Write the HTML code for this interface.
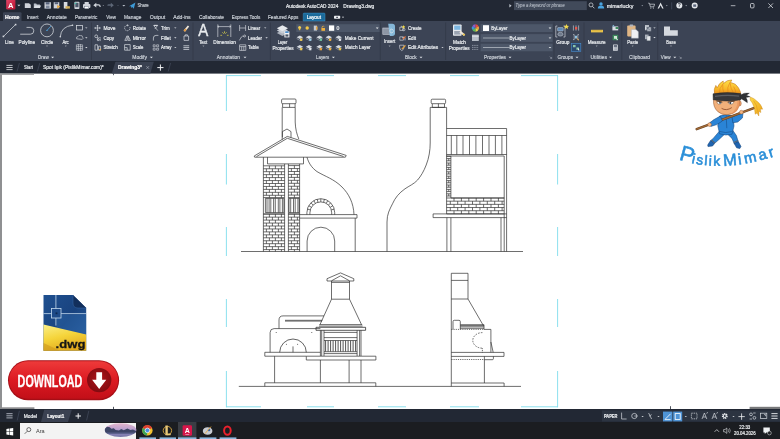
<!DOCTYPE html>
<html lang="en"><head><meta charset="utf-8"><title>Autodesk AutoCAD 2024 - Drawing3.dwg</title>
<style>
html,body{margin:0;padding:0;background:#fff;overflow:hidden}
body{width:780px;height:439px;position:relative;font-family:"Liberation Sans",sans-serif}
svg{position:absolute;left:0;top:0;display:block;will-change:transform}
text{font-family:"Liberation Sans",sans-serif}
.t{fill:#eaedf0;font-size:5.1px;stroke:#eaedf0;stroke-width:0.2px}
.tb{fill:#dfe3e8;font-size:5.1px}
.tp{fill:#cfd4db;font-size:5.1px;stroke:#cfd4db;stroke-width:0.16px}
.ln{fill:none;stroke:#2f2f2f;stroke-width:0.7;stroke-linejoin:miter}
.ic{fill:none;stroke:#d5dae0;stroke-width:0.7}
</style></head><body>
<svg width="780" height="439" viewBox="0 0 780 439">
<!-- backgrounds -->

<rect x="0" y="0" width="780" height="439" fill="#ffffff"/>
<rect x="0" y="0" width="780" height="21" fill="#222834"/>
<rect x="0" y="21" width="780" height="40" fill="#3c4455"/>
<rect x="0" y="61" width="780" height="12.6" fill="#222834"/>
<rect x="0" y="73.6" width="2" height="335" fill="#8f9092"/>
<rect x="0" y="73.6" width="34" height="1.3" fill="#9a9b9d"/>
<rect x="0" y="407.300" width="34.400" height="1.800" fill="#8a8b8d"/>
<rect x="749.600" y="406.800" width="31" height="2.200" fill="#77787a"/>
<rect x="0" y="409" width="780" height="13" fill="#222834"/>
<rect x="0" y="422" width="780" height="17" fill="#1b1d21"/>
<!-- titlebar -->
<defs><linearGradient id="alogo" x1="0" y1="0" x2="1" y2="1"><stop offset="0" stop-color="#e8476a"/><stop offset="1" stop-color="#b5122f"/></linearGradient></defs>
<rect x="6.2" y="-1" width="9.2" height="10.6" rx="1.3" fill="url(#alogo)"/>
<text x="10.8" y="8" font-size="7.6" font-weight="bold" fill="#fff" text-anchor="middle">A</text>
<path d="M17.4 4.85h3l-1.5 1.5z" fill="#d5dae0"/>
<g fill="#cfd3da">
<path d="M24.8 3.2h4.2l1.8 1.6v3.2h-6z"/>
<path d="M33.8 3.6h2.4l.7.8h3v3.6h-6.1z" fill="#b9bfc9"/><path d="M34.9 5.4h6.3l-1.3 2.6h-6.1z" fill="#d9dde3"/>
<path d="M44.5 2.2h6.4v6.4h-6.4z"/><rect x="45.7" y="2.2" width="3.8" height="2.3" fill="#56617a"/><rect x="45.9" y="5.6" width="3.6" height="3" fill="#7d879a"/>
<path d="M53.7 2.2h5.6v6.2h-5.6z"/><rect x="54.7" y="2.2" width="3.4" height="2" fill="#56617a"/><path d="M57.2 5l3.2 1.6-3.2 1.8z" fill="#e5a53a"/>
<path d="M63.8 2h3.6v6.4h-3.6z" fill="#d8dce2"/><path d="M65.5 6.2h4.4v2.4h-4.4z" fill="#d6b15a"/>
<rect x="74.4" y="1.8" width="5" height="7.2" rx="0.8" fill="#cfd4db"/><rect x="75.300" y="2.800" width="3.200" height="4.400" fill="#4a5568"/><path d="M74 3.400l2.200-1.200v2.400z" fill="#4ab8a8"/>
<rect x="83" y="4" width="7.4" height="4" rx="0.9"/><rect x="84.6" y="2" width="4.2" height="2.4"/><rect x="84.6" y="6.4" width="4.2" height="2.4" fill="#fff" stroke="#565f70" stroke-width="0.4"/>
<path d="M93.3 5.2l3-2.4v1.5h2.2q2.2 0 2.2 2.2v.6h-1.2v-.5q0-1-1-1h-2.2v2z"/>
</g>
<path d="M102.5 5.2h1.6l-0.8 0.8z" fill="#aeb5bf"/>
<path d="M113.8 5.2l-3-2.4v1.5h-2.2q-1.2 0-1.2 1v.5h1.2h2.2v2z" fill="#5d6777"/>
<path d="M117.2 5.2h1.6l-0.8 0.8z" fill="#6d7787"/>
<path d="M122.3 4.95h3l-1.5 1.5z" fill="#b9c0ca"/>
<path d="M129 6.2l6.4-3.6-1.6 6.2-1.6-1.9-1.1 1.2v-1.8z" fill="#3d9ad6"/>
<text class="tp" x="137.4" y="7.47" font-size="5.2" textLength="11.3" lengthAdjust="spacingAndGlyphs" >Share</text>
<text class="t" x="286" y="7.5" font-size="5" textLength="52.3" lengthAdjust="spacingAndGlyphs" >Autodesk AutoCAD 2024</text>
<text class="t" x="343.3" y="7.5" font-size="5" textLength="31" lengthAdjust="spacingAndGlyphs" >Drawing3.dwg</text>
<rect x="514" y="1.200" width="72.800" height="8.900" fill="#414a5a"/>
<path d="M509.400 4l2.200 1.700-2.200 1.700z" fill="#c4cad3"/>
<text class="tp" x="515.6" y="7.43" font-size="4.8" textLength="49" lengthAdjust="spacingAndGlyphs" font-style="italic" style="fill:#aab1bc;stroke:#aab1bc">Type a keyword or phrase</text>
<circle cx="591" cy="4.9" r="2" fill="none" stroke="#d5dae0" stroke-width="0.7"/><path d="M592.5 6.4l1.9 1.9" stroke="#d5dae0" stroke-width="0.8"/>
<circle cx="601" cy="3.9" r="1.7" fill="#4aa3df"/><path d="M597.8 8.6q0-3 3.2-3t3.2 3z" fill="#4aa3df"/>
<text class="t" x="606.7" y="7.6" font-size="5" textLength="26.6" lengthAdjust="spacingAndGlyphs" >mimarlucky</text>
<path d="M641.4 5.35h1.8l-0.9 0.9z" fill="#aeb5bf"/>
<path d="M648.2 3.2h1.2l1 3.6h3.4l.8-2.6h-4.6" fill="none" stroke="#d5dae0" stroke-width="0.7"/><circle cx="650.8" cy="8" r="0.6" fill="#d5dae0"/><circle cx="653.4" cy="8" r="0.6" fill="#d5dae0"/>
<path d="M657.6 8.4l3-5.8 3 5.8h-1.4l-1.6-3.2-1.6 3.2z" fill="#e4e7eb"/>
<path d="M665.9 5.35h1.8l-0.9 0.9z" fill="#aeb5bf"/>
<path d="M671.7 2.4v7" stroke="#596274" stroke-width="0.5"/>
<circle cx="679.3" cy="5.6" r="3" fill="#e4e7eb"/><text x="679.3" y="7.4" font-size="5" font-weight="bold" fill="#222834" text-anchor="middle">?</text>
<path d="M685.3 5.35h1.8l-0.9 0.9z" fill="#aeb5bf"/>
<circle cx="694.7" cy="5.6" r="3" fill="#e4e7eb"/><path d="M693.2 4.4h3v2.4h-3z" fill="#59647a"/>
<path d="M730.8 5.7h4.6" stroke="#e4e7eb" stroke-width="0.7"/>
<rect x="750.5" y="3.5" width="3.5" height="4.4" rx="0.9" fill="none" stroke="#e4e7eb" stroke-width="0.75"/>
<path d="M768.4 3.4l4.6 4.6M773 3.4l-4.6 4.6" stroke="#e4e7eb" stroke-width="0.75"/>
<!-- tabs -->
<path d="M3 21V13.3q0-1 1-1h16.5q1 0 1 1V21z" fill="#3c4455"/>
<text class="t" x="5.1" y="18.67" font-size="5.2" textLength="14.4" lengthAdjust="spacingAndGlyphs" style="fill:#ffffff;stroke:#ffffff" font-weight="bold">Home</text>
<text class="tp" x="27" y="18.64" font-size="5.1" textLength="11.4" lengthAdjust="spacingAndGlyphs" >Insert</text>
<text class="tp" x="46.8" y="18.64" font-size="5.1" textLength="19.9" lengthAdjust="spacingAndGlyphs" >Annotate</text>
<text class="tp" x="74.9" y="18.64" font-size="5.1" textLength="22.5" lengthAdjust="spacingAndGlyphs" >Parametric</text>
<text class="tp" x="106.3" y="18.64" font-size="5.1" textLength="9.6" lengthAdjust="spacingAndGlyphs" >View</text>
<text class="tp" x="124" y="18.64" font-size="5.1" textLength="17.5" lengthAdjust="spacingAndGlyphs" >Manage</text>
<text class="tp" x="149.7" y="18.64" font-size="5.1" textLength="15.6" lengthAdjust="spacingAndGlyphs" >Output</text>
<text class="tp" x="173.3" y="18.64" font-size="5.1" textLength="17.4" lengthAdjust="spacingAndGlyphs" >Add-ins</text>
<text class="tp" x="199" y="18.64" font-size="5.1" textLength="25" lengthAdjust="spacingAndGlyphs" >Collaborate</text>
<text class="tp" x="231.7" y="18.64" font-size="5.1" textLength="28.5" lengthAdjust="spacingAndGlyphs" >Express Tools</text>
<text class="tp" x="268" y="18.64" font-size="5.1" textLength="30.4" lengthAdjust="spacingAndGlyphs" >Featured Apps</text>
<path d="M303.200 21V13.900q0-.8.8-.8h20.200q.8 0 .8.800V21z" fill="#1b6a9a" stroke="#3d93c6" stroke-width="0.5"/>
<text class="t" x="306.7" y="18.64" font-size="5.1" textLength="14.3" lengthAdjust="spacingAndGlyphs" style="fill:#ffffff;stroke:#ffffff">Layout</text>
<rect x="334" y="15.800" width="6.200" height="3" rx="0.700" fill="#eef0f3"/><rect x="336.200" y="16.800" width="1.800" height="1" fill="#2a3140"/>
<path d="M341.9 16.85h2.2l-1.1 1.1z" fill="#e4e7eb"/>
<!-- ribbon -->
<path d="M91.5 22.5V60" stroke="#303846" stroke-width="0.7"/>
<path d="M193 22.5V60" stroke="#303846" stroke-width="0.7"/>
<path d="M270.4 22.5V60" stroke="#303846" stroke-width="0.7"/>
<path d="M380.3 22.5V60" stroke="#303846" stroke-width="0.7"/>
<path d="M445.6 22.5V60" stroke="#303846" stroke-width="0.7"/>
<path d="M554 22.5V60" stroke="#303846" stroke-width="0.7"/>
<path d="M584 22.5V60" stroke="#303846" stroke-width="0.7"/>
<path d="M621.8 22.5V60" stroke="#303846" stroke-width="0.7"/>
<path d="M657.7 22.5V60" stroke="#303846" stroke-width="0.7"/>
<g fill="none" stroke="#d8dce2" stroke-width="0.75">
<path d="M3.4 36.5L15.5 24.6"/>
<path d="M20.2 34.2H30.4A3.4 3.4 0 0 0 30.4 27.4H26.5"/>
<circle cx="47" cy="30.4" r="6.4"/>
<path d="M60.3 36.8Q61 26.5 72.5 25.2"/>
<rect x="76.4" y="25.6" width="6.2" height="4.4"/>
<path d="M76.6 38.8q-.8-2 1.4-2.2q.6-1.8 2.6-1q2-.4 2 1.6q1.2 1.2-.4 2.2z" stroke-width="0.6"/>
<path d="M76.4 44.8h6.2v5.4h-6.2zM76.4 46.6h6.2M76.4 48.4h6.2M78.4 44v7M80.6 44v7" stroke-width="0.55"/>
</g>
<rect x="2.6" y="35.6" width="1.6" height="1.6" fill="#d8dce2"/><rect x="14.8" y="23.8" width="1.6" height="1.6" fill="#d8dce2"/>
<path d="M47 30.4L51 26" stroke="#4aa3df" stroke-width="0.8"/><circle cx="47" cy="30.4" r="0.7" fill="#4aa3df"/>
<circle cx="60.3" cy="36.8" r="0.8" fill="#d8dce2"/><circle cx="72.5" cy="25.2" r="0.8" fill="#d8dce2"/>
<text class="t" x="5.1" y="43.74" font-size="5.1" textLength="8.6" lengthAdjust="spacingAndGlyphs" >Line</text>
<text class="t" x="18.5" y="43.74" font-size="5.1" textLength="16.5" lengthAdjust="spacingAndGlyphs" >Polyline</text>
<text class="t" x="41" y="43.74" font-size="5.1" textLength="12.3" lengthAdjust="spacingAndGlyphs" >Circle</text>
<text class="t" x="62.4" y="43.74" font-size="5.1" textLength="6.3" lengthAdjust="spacingAndGlyphs" >Arc</text>
<path d="M46.05 45.625h1.9l-0.95 0.95z" fill="#eef0f3"/>
<path d="M64.85 45.625h1.9l-0.95 0.95z" fill="#eef0f3"/>
<path d="M85.1 27.4h2.4l-1.2 1.2z" fill="#dde1e6"/>
<path d="M85.1 37.2h2.4l-1.2 1.2z" fill="#dde1e6"/>
<path d="M85.1 47h2.4l-1.2 1.2z" fill="#dde1e6"/>
<text class="tp" x="38" y="59.14" font-size="5.1" textLength="10.7" lengthAdjust="spacingAndGlyphs" >Draw</text>
<path d="M51.1 56.75h3l-1.5 1.5z" fill="#dde1e6"/>
<g fill="none" stroke="#d8dce2" stroke-width="0.7">
<path d="M97.5 25.2v5.6M94.7 28h5.6M96.5 26.2l1-1 1 1M96.5 29.8l1 1 1-1M95.7 27l-1 1 1 1M99.3 27l1 1-1 1"/>
<circle cx="96.2" cy="36.3" r="1.4"/><path d="M97.4 37.6h3v3h-3z" stroke-dasharray="0.9 0.5"/><circle cx="98.4" cy="39.4" r="0.9"/>
<path d="M95 44.8h2.6v5.4H95zM98.6 46.2h2v4h-2z"/>
<path d="M129.8 27A2.7 2.7 0 1 1 127.4 25.3" stroke-dasharray="1.4 0.6"/><path d="M127.2 24.2l1.6 1.1-1.6 1.1z" fill="#d8dce2" stroke="none"/>
<path d="M124.8 40.4l2.3-4.6v4.6zM128.1 35.8l2.3 4.6h-2.3z"/>
<path d="M124.6 44.6h5.6v5.6h-5.6zM124.6 47.6h2.6v2.6"/>
<path d="M153.4 25.2l4.4 5.4M157.8 25.2l-3 3.8"/><path d="M154 25.4h3.6" stroke-width="1.1"/>
<path d="M153.4 40.6V38q0-2.6 2.6-2.6h2.4"/>
<path d="M153.2 44.8h2v2h-2zM156.6 44.8h2v2h-2zM153.2 48.2h2v2h-2zM156.6 48.2h2v2h-2z" stroke-width="0.6"/>
<path d="M184 36h4.6v4.4H184zM185.2 36v-1.2h2.2V36"/>
<path d="M183.4 45.8h5.8M183.4 47.6h5.8M183.4 49.4h5.8" stroke-width="0.8"/>
</g>
<path d="M183.6 30.6l4.2-5.2 1.4 1.1-4.2 5.2z" fill="#f0e6d8"/><path d="M183.6 30.6l1.6-2 1.4 1.1-1.6 2z" fill="#e89a3c"/>
<path d="M99 49.6l1.8-1.2v2.4z" fill="#e4a94a"/>
<text class="t" x="103.4" y="29.84" font-size="5.1" textLength="12" lengthAdjust="spacingAndGlyphs" >Move</text>
<text class="t" x="103.4" y="39.74" font-size="5.1" textLength="10.6" lengthAdjust="spacingAndGlyphs" >Copy</text>
<text class="t" x="103.4" y="49.34" font-size="5.1" textLength="14.4" lengthAdjust="spacingAndGlyphs" >Stretch</text>
<text class="t" x="132.7" y="29.84" font-size="5.1" textLength="13.3" lengthAdjust="spacingAndGlyphs" >Rotate</text>
<text class="t" x="132.7" y="39.74" font-size="5.1" textLength="13.3" lengthAdjust="spacingAndGlyphs" >Mirror</text>
<text class="t" x="132.7" y="49.34" font-size="5.1" textLength="10.6" lengthAdjust="spacingAndGlyphs" >Scale</text>
<text class="t" x="161" y="29.84" font-size="5.1" textLength="8.7" lengthAdjust="spacingAndGlyphs" >Trim</text>
<text class="t" x="161" y="39.74" font-size="5.1" textLength="9.7" lengthAdjust="spacingAndGlyphs" >Fillet</text>
<text class="t" x="161" y="49.34" font-size="5.1" textLength="10.5" lengthAdjust="spacingAndGlyphs" >Array</text>
<path d="M174.1 27.4h2.4l-1.2 1.2z" fill="#dde1e6"/>
<path d="M174.1 37.3h2.4l-1.2 1.2z" fill="#dde1e6"/>
<path d="M174.1 46.9h2.4l-1.2 1.2z" fill="#dde1e6"/>
<text class="tp" x="132.3" y="59.14" font-size="5.1" textLength="14.7" lengthAdjust="spacingAndGlyphs" >Modify</text>
<path d="M149.9 56.75h3l-1.5 1.5z" fill="#dde1e6"/>
<text x="203.200" y="36.300" font-size="15.600" fill="#e8ebee" stroke="#e8ebee" stroke-width="0.35" text-anchor="middle" textLength="10" lengthAdjust="spacingAndGlyphs">A</text>
<text class="t" x="199.2" y="43.74" font-size="5.1" textLength="8" lengthAdjust="spacingAndGlyphs" >Text</text>
<path d="M202.45 45.625h1.9l-0.95 0.95z" fill="#eef0f3"/>
<g fill="none" stroke="#d8dce2" stroke-width="0.65">
<path d="M217.8 24.4v12.6M230.8 24.4v12.6M217.8 26.6h13M219 25.8l-1.2.8 1.2.8M229.6 25.8l1.2.8-1.2.8"/>
<path d="M239.6 25v6M245.6 25v6M239.6 28h6"/>
<path d="M239.4 40.4l2-3.4q1-1.4 2.4-.4"/><circle cx="244.6" cy="36" r="1"/>
<path d="M239.6 44.8h6.2v5.6h-6.2zM239.6 46.6h6.2M241.7 46.6v3.8M243.8 46.6v3.8"/>
</g>
<path d="M220.400 35.300h1.700M222.400 32.300l1.300 1.400M224.500 31.300v1.900M226.600 32.300l-1.300 1.400M228.600 35.300h-1.700" stroke="#dcd24a" stroke-width="0.75"/>
<text class="t" x="213.3" y="43.74" font-size="5.1" textLength="22.5" lengthAdjust="spacingAndGlyphs" >Dimension</text>
<text class="t" x="248.1" y="29.84" font-size="5.1" textLength="12" lengthAdjust="spacingAndGlyphs" >Linear</text>
<path d="M264 27.4h2.4l-1.2 1.2z" fill="#dde1e6"/>
<text class="t" x="248.1" y="39.74" font-size="5.1" textLength="13.9" lengthAdjust="spacingAndGlyphs" >Leader</text>
<path d="M265.4 37.3h2.4l-1.2 1.2z" fill="#dde1e6"/>
<text class="t" x="248.1" y="49.34" font-size="5.1" textLength="10.6" lengthAdjust="spacingAndGlyphs" >Table</text>
<text class="tp" x="216.8" y="59.14" font-size="5.1" textLength="23.2" lengthAdjust="spacingAndGlyphs" >Annotation</text>
<path d="M243.5 56.75h3l-1.5 1.5z" fill="#dde1e6"/>
<g>
<path d="M276.8 33l5.6-3 5.6 3-5.6 3z" fill="#aeb4be"/><path d="M276.8 30.6l5.6-3 5.6 3-5.6 3z" fill="#c9ced6"/><path d="M276.8 28.2l5.6-3 5.6 3-5.6 3z" fill="#e6e9ed"/>
<rect x="284.4" y="31.4" width="5" height="6" fill="#f4f6f8"/><rect x="285.2" y="31.4" width="3.4" height="1.6" fill="#4a8fd0"/><rect x="285.4" y="34.4" width="3" height="2.2" fill="#4c5669"/>
</g>
<text class="t" x="277.7" y="43.74" font-size="5.1" textLength="9.6" lengthAdjust="spacingAndGlyphs" >Layer</text>
<text class="t" x="272.5" y="50.04" font-size="5.1" textLength="21.2" lengthAdjust="spacingAndGlyphs" >Properties</text>
<rect x="296.3" y="24.2" width="83.3" height="7.8" fill="#4d5769"/>
<circle cx="299.6" cy="27.4" r="1.5" fill="#f3cf55"/><rect x="298.9" y="28.6" width="1.4" height="1.6" fill="#e8b93c"/>
<circle cx="307.2" cy="28" r="1.7" fill="#f3c746"/>
<path d="M313.8 25.6h3.2v5h-3.2z" fill="#c5cad2"/><path d="M316 26.4h1.6v3.4H316z" fill="#e4a94a"/>
<rect x="321.4" y="28" width="3.6" height="2.8" fill="#efb13e"/><path d="M322 28v-1.2q1.2-1.4 2.4 0" fill="none" stroke="#efb13e" stroke-width="0.7"/>
<rect x="329" y="25.4" width="5.2" height="5.4" fill="#ffffff"/>
<text class="t" x="336.6" y="30.04" font-size="5.4" >0</text>
<path d="M375.8 27.5h2.8l-1.4 1.4z" fill="#e8ebee"/>
<path d="M296.7 37.3l3.2-1.7 3.2 1.7-3.2 1.7z" fill="#d3d8df"/><path d="M296.7 38.6l3.2 1.7 3.2-1.7" fill="none" stroke="#a9b0bb" stroke-width="0.6"/><rect x="300.1" y="38.5" width="2.2" height="2.4" fill="#f3cf55"/>
<path d="M305.8 37.3l3.2-1.7 3.2 1.7-3.2 1.7z" fill="#d3d8df"/><path d="M305.8 38.6l3.2 1.7 3.2-1.7" fill="none" stroke="#a9b0bb" stroke-width="0.6"/><rect x="309.2" y="38.5" width="2.2" height="2.4" fill="#9fd0e8"/>
<path d="M316.4 37.3l3.2-1.7 3.2 1.7-3.2 1.7z" fill="#d3d8df"/><path d="M316.4 38.6l3.2 1.7 3.2-1.7" fill="none" stroke="#a9b0bb" stroke-width="0.6"/><rect x="319.8" y="38.5" width="2.2" height="2.4" fill="#6fc3a0"/>
<path d="M325.6 37.3l3.2-1.7 3.2 1.7-3.2 1.7z" fill="#d3d8df"/><path d="M325.6 38.6l3.2 1.7 3.2-1.7" fill="none" stroke="#a9b0bb" stroke-width="0.6"/><rect x="329" y="38.5" width="2.2" height="2.4" fill="#efb13e"/>
<path d="M335.5 37.3l3.2-1.7 3.2 1.7-3.2 1.7z" fill="#d3d8df"/><path d="M335.5 38.6l3.2 1.7 3.2-1.7" fill="none" stroke="#a9b0bb" stroke-width="0.6"/><rect x="338.9" y="38.5" width="2.2" height="2.4" fill="#e4e7eb"/>
<path d="M296.7 46.7l3.2-1.7 3.2 1.7-3.2 1.7z" fill="#d3d8df"/><path d="M296.7 48l3.2 1.7 3.2-1.7" fill="none" stroke="#a9b0bb" stroke-width="0.6"/><rect x="300.1" y="47.9" width="2.2" height="2.4" fill="#f3cf55"/>
<path d="M305.8 46.7l3.2-1.7 3.2 1.7-3.2 1.7z" fill="#d3d8df"/><path d="M305.8 48l3.2 1.7 3.2-1.7" fill="none" stroke="#a9b0bb" stroke-width="0.6"/><rect x="309.2" y="47.9" width="2.2" height="2.4" fill="#e4e7eb"/>
<path d="M316.4 46.7l3.2-1.7 3.2 1.7-3.2 1.7z" fill="#d3d8df"/><path d="M316.4 48l3.2 1.7 3.2-1.7" fill="none" stroke="#a9b0bb" stroke-width="0.6"/><rect x="319.8" y="47.9" width="2.2" height="2.4" fill="#e8a03c"/>
<path d="M325.6 46.7l3.2-1.7 3.2 1.7-3.2 1.7z" fill="#d3d8df"/><path d="M325.6 48l3.2 1.7 3.2-1.7" fill="none" stroke="#a9b0bb" stroke-width="0.6"/><rect x="329" y="47.9" width="2.2" height="2.4" fill="#efb13e"/>
<path d="M335.5 46.7l3.2-1.7 3.2 1.7-3.2 1.7z" fill="#d3d8df"/><path d="M335.5 48l3.2 1.7 3.2-1.7" fill="none" stroke="#a9b0bb" stroke-width="0.6"/><rect x="338.9" y="47.9" width="2.2" height="2.4" fill="#e8c24a"/>
<text class="t" x="344.7" y="39.74" font-size="5.1" textLength="28.8" lengthAdjust="spacingAndGlyphs" >Make Current</text>
<text class="t" x="344.7" y="49.14" font-size="5.1" textLength="26" lengthAdjust="spacingAndGlyphs" >Match Layer</text>
<text class="tp" x="316" y="59.14" font-size="5.1" textLength="13.2" lengthAdjust="spacingAndGlyphs" >Layers</text>
<path d="M331.9 56.75h3l-1.5 1.5z" fill="#dde1e6"/>
<rect x="382.8" y="28" width="8.6" height="6.4" fill="#8d96a5" stroke="#c9ced6" stroke-width="0.6"/>
<path d="M388.2 23.8h4q2.8 0 2.8 2.8v7q0 2.4-2.8 2.4h-2.4z" fill="#8cc3e6" opacity="0.9"/><circle cx="391.6" cy="31" r="1.8" fill="none" stroke="#e4e7eb" stroke-width="0.6"/>
<text class="t" x="384" y="43.24" font-size="5.1" textLength="11.2" lengthAdjust="spacingAndGlyphs" >Insert</text>
<path d="M388.65 45.625h1.9l-0.95 0.95z" fill="#eef0f3"/>
<g fill="none" stroke="#d8dce2" stroke-width="0.65">
<path d="M399.8 30.4v-3.2h3.4v3.2zM401.4 27.2v-1.4"/><circle cx="403.8" cy="29.6" r="1.2"/>
<path d="M399.8 40.2v-3.4h3.6v3.4zM402 37.6h3v2.8"/>
<path d="M399.6 45.2h4.4v2q0 2.4-2.2 3.4q-2.2-1-2.2-3.4z"/>
</g>
<path d="M403.6 25l.5 1.2 1.2.2-.9.9.2 1.3-1-.6-1.2.6.3-1.3-.9-.9 1.2-.2z" fill="#f0d84c"/>
<path d="M402.4 38.8l2.6-2.8.9.8-2.6 2.8z" fill="#e8763c"/>
<path d="M401.4 48.8l3.6-3.8.9.8-3.6 3.8z" fill="#e8a63c"/>
<text class="t" x="408" y="29.84" font-size="5.1" textLength="13.6" lengthAdjust="spacingAndGlyphs" >Create</text>
<text class="t" x="408" y="39.74" font-size="5.1" textLength="8" lengthAdjust="spacingAndGlyphs" >Edit</text>
<text class="t" x="408" y="49.34" font-size="5.1" textLength="30.1" lengthAdjust="spacingAndGlyphs" >Edit Attributes</text>
<path d="M441.3 46.9h2.4l-1.2 1.2z" fill="#dde1e6"/>
<text class="tp" x="405.1" y="59.14" font-size="5.1" textLength="11.6" lengthAdjust="spacingAndGlyphs" >Block</text>
<path d="M419.5 56.75h3l-1.5 1.5z" fill="#dde1e6"/>
<rect x="453" y="24.4" width="8.6" height="11.4" rx="0.8" fill="#e6e9ed"/><rect x="454.2" y="25.6" width="6.2" height="4.2" fill="#7db7e2"/><rect x="454.2" y="31" width="6.2" height="3.6" fill="#9aa3b1"/>
<path d="M459.4 32.4l4.6 3.6 1.2-1.6-4.6-3.6z" fill="#f0e6d8"/><path d="M462.6 34.8l1.4 1.2 1.2-1.6-1.4-1.2z" fill="#e8c24a"/>
<text class="t" x="453" y="43.74" font-size="5.1" textLength="13" lengthAdjust="spacingAndGlyphs" >Match</text>
<text class="t" x="448.7" y="50.04" font-size="5.1" textLength="20.9" lengthAdjust="spacingAndGlyphs" >Properties</text>
<path d="M475.4 28L475.40 24.30A3.7 3.7 0 0 1 478.60 26.15Z" fill="#e8483c"/><path d="M475.4 28L478.60 26.15A3.7 3.7 0 0 1 478.60 29.85Z" fill="#f0a03c"/><path d="M475.4 28L478.60 29.85A3.7 3.7 0 0 1 475.40 31.70Z" fill="#e8d84c"/><path d="M475.4 28L475.40 31.70A3.7 3.7 0 0 1 472.20 29.85Z" fill="#58b85c"/><path d="M475.4 28L472.20 29.85A3.7 3.7 0 0 1 472.20 26.15Z" fill="#3c9ad8"/><path d="M475.4 28L472.20 26.15A3.7 3.7 0 0 1 475.40 24.30Z" fill="#8a5cc8"/>
<rect x="472" y="34.6" width="6.8" height="6.4" fill="#b9bfc8"/><path d="M472 36.2h6.8" stroke="#e6e9ed" stroke-width="0.9"/>
<path d="M472 45.4h6.8M472 47.4h6.8M472 49.4h6.8" stroke="#8e97a5" stroke-width="0.9" stroke-dasharray="1.5 0.7"/>
<rect x="480.6" y="24.2" width="72" height="7.8" fill="#4d5769"/>
<path d="M548.6 27.5h2.8l-1.4 1.4z" fill="#e8ebee"/>
<rect x="480.6" y="34.1" width="72" height="7.8" fill="#4d5769"/>
<path d="M548.6 37.4h2.8l-1.4 1.4z" fill="#e8ebee"/>
<rect x="480.6" y="43.7" width="72" height="7.6" fill="#4d5769"/>
<path d="M548.6 46.9h2.8l-1.4 1.4z" fill="#e8ebee"/>
<rect x="483" y="25.2" width="6" height="5.8" fill="#ffffff"/>
<text class="t" x="491.2" y="29.97" font-size="5.2" textLength="16.2" lengthAdjust="spacingAndGlyphs" >ByLayer</text>
<path d="M483 38H509.5M483 47.5H509.5" stroke="#d5dae0" stroke-width="0.6"/>
<text class="t" x="509.5" y="39.87" font-size="5.2" textLength="16.5" lengthAdjust="spacingAndGlyphs" >ByLayer</text>
<text class="t" x="509.5" y="49.37" font-size="5.2" textLength="16.5" lengthAdjust="spacingAndGlyphs" >ByLayer</text>
<text class="tp" x="484" y="59.14" font-size="5.1" textLength="22" lengthAdjust="spacingAndGlyphs" >Properties</text>
<path d="M508.5 56.75h3l-1.5 1.5z" fill="#dde1e6"/>
<path d="M549.8 56.6l1.8 1.8M551.6 57v1.4h-1.4" stroke="#aeb5bf" stroke-width="0.5" fill="none"/>
<g fill="none" stroke="#d8dce2" stroke-width="0.65">
<path d="M557.4 26h-1.6v11h1.6M563.4 26h1.6v11h-1.6"/>
</g>
<rect x="557.6" y="27.6" width="5.6" height="3.4" rx="0.6" fill="#5d88b5" stroke="#c9ced6" stroke-width="0.5"/><ellipse cx="560.4" cy="34.2" rx="2.6" ry="1.9" fill="#6f7a8c" stroke="#c9ced6" stroke-width="0.5"/>
<path d="M566.4 24l.8 1.7 1.8.2-1.3 1.3.3 1.8-1.6-.9-1.6.9.3-1.8-1.3-1.3 1.8-.2z" fill="#f0d84c"/>
<text class="t" x="556.3" y="43.74" font-size="5.1" textLength="13.1" lengthAdjust="spacingAndGlyphs" >Group</text>
<path d="M573.4 25.4v5.2M576 25.4v5.2M578.6 25.4v5.2" stroke="#d5dae0" stroke-width="0.6"/><path d="M575 27h2.2v2.4H575z" fill="#e8584c"/>
<path d="M573 34.6h1.2v5H573M579 34.6h-1.2v5H579" fill="none" stroke="#d5dae0" stroke-width="0.6"/><path d="M575 35.8h2v2.6h-2z" fill="#8cc3e6"/><path d="M576.6 38.2l2.4 2.2" stroke="#e8a63c" stroke-width="0.9"/>
<rect x="571.4" y="43.4" width="9.4" height="8" fill="#2c4a70" stroke="#4a8fd0" stroke-width="0.6"/>
<path d="M573 45h2.6v2.2H573zM576.4 47.4h2.6v2.4h-2.6z" fill="#8cc3a6"/><path d="M577.6 47.6l2 2.6-1.2.2z" fill="#fff"/>
<text class="tp" x="557.5" y="59.14" font-size="5.1" textLength="15.5" lengthAdjust="spacingAndGlyphs" >Groups</text>
<path d="M575.5 56.75h3l-1.5 1.5z" fill="#dde1e6"/>
<rect x="591" y="29.8" width="12" height="2.6" fill="#e8c24a"/><path d="M593 29.8v1.2M595 29.8v1.2M597 29.8v1.2M599 29.8v1.2M601 29.8v1.2" stroke="#a8862c" stroke-width="0.4"/>
<text class="t" x="587.7" y="43.74" font-size="5.1" textLength="17.9" lengthAdjust="spacingAndGlyphs" >Measure</text>
<path d="M595.75 45.625h1.9l-0.95 0.95z" fill="#eef0f3"/>
<path d="M612.4 26.4h5.8v4h-5.8z" fill="#d8dce2"/><path d="M613 24.8l2 1.8h-2.6z" fill="#8cc3e6"/><path d="M615.6 27h2.6v2h-2.6z" fill="#3c8a5c"/>
<path d="M612.6 34.8h5.6v5.4h-5.6z" fill="#3c8a5c"/><path d="M614 36h3v2.8h-3z" fill="#cfe6d6"/><path d="M616.2 37.4l1.8 2.6-1.2.2z" fill="#fff"/>
<rect x="613" y="44.4" width="4.8" height="6.4" rx="0.5" fill="#d8dce2"/><rect x="613.8" y="45.2" width="3.2" height="1.6" fill="#4c5669"/><path d="M613.8 47.8h3.2M613.8 49.2h3.2" stroke="#4c5669" stroke-width="0.6" stroke-dasharray="0.8 0.4"/>
<text class="tp" x="590.4" y="59.14" font-size="5.1" textLength="16.6" lengthAdjust="spacingAndGlyphs" >Utilities</text>
<path d="M609 56.75h3l-1.5 1.5z" fill="#dde1e6"/>
<rect x="627.2" y="25.6" width="8.4" height="10.8" rx="0.8" fill="#e0b684"/><rect x="629.6" y="24.4" width="3.6" height="2.2" rx="0.6" fill="#aeb4be"/>
<path d="M631.4 29.4h4.6l2.4 2.4v6.4h-7z" fill="#eef0f3" stroke="#9aa3b1" stroke-width="0.4"/>
<text class="t" x="627.2" y="43.74" font-size="5.1" textLength="11.1" lengthAdjust="spacingAndGlyphs" >Paste</text>
<path d="M631.75 45.625h1.9l-0.95 0.95z" fill="#eef0f3"/>
<path d="M645 25.2h4v5h-4z" fill="#d8dce2"/><path d="M647 27h4.2v4.4H647z" fill="#aeb4be" stroke="#3b4453" stroke-width="0.4"/><path d="M646 26.4l3.4 3.4M649.4 26.4l-3.4 3.4" stroke="#4c5669" stroke-width="0.6"/>
<path d="M645 34.6h3.6v4.6H645z" fill="#aeb4be"/><path d="M646.8 36h3.8v4.8h-3.8z" fill="#e4e7eb" stroke="#3b4453" stroke-width="0.3"/>
<path d="M653.3 27.4h2.4l-1.2 1.2z" fill="#dde1e6"/>
<path d="M653.3 37h2.4l-1.2 1.2z" fill="#dde1e6"/>
<text class="tp" x="629" y="59.14" font-size="5.1" textLength="21" lengthAdjust="spacingAndGlyphs" >Clipboard</text>
<path d="M664 26.4h6v3.8h7.8v5.6H664z" fill="#d5d9df"/>
<text class="t" x="666.3" y="43.74" font-size="5.1" textLength="9.4" lengthAdjust="spacingAndGlyphs" >Base</text>
<path d="M670.05 45.625h1.9l-0.95 0.95z" fill="#eef0f3"/>
<text class="tp" x="660.8" y="59.14" font-size="5.1" textLength="9.8" lengthAdjust="spacingAndGlyphs" >View</text>
<path d="M673.3 56.75h3l-1.5 1.5z" fill="#dde1e6"/>
<path d="M679.4 56.6l1.8 1.8M681.2 57v1.4h-1.4" stroke="#aeb5bf" stroke-width="0.5" fill="none"/>
<!-- filetabs -->
<path d="M6.4 65.4h6.2M6.4 67.5h6.2M6.4 69.6h6.2" stroke="#e4e7eb" stroke-width="0.8"/>
<path d="M17 71.5l2.4-8.5M37.4 71.5l2.4-8.5" stroke="#4a5364" stroke-width="0.6"/>
<text class="t" x="24" y="69.24" font-size="5.1" textLength="9" lengthAdjust="spacingAndGlyphs" >Start</text>
<text class="t" x="43" y="69.24" font-size="5.1" textLength="60.7" lengthAdjust="spacingAndGlyphs" >Spot Işık (PislikMimar.com)*</text>
<path d="M111.800 73.600L115.200 62.400q.200-.600.800-.600H153.800L150.300 73.600z" fill="#3a4151"/><rect x="113" y="73.600" width="0.700" height="1.600" fill="#222834"/>
<text class="t" x="118" y="69.24" font-size="5.1" textLength="24" lengthAdjust="spacingAndGlyphs" font-weight="bold" style="fill:#ffffff;stroke:#ffffff">Drawing3*</text>
<path d="M146.4 66.2l2.6 2.6M149 66.2l-2.6 2.6" stroke="#aeb5bf" stroke-width="0.6"/>
<path d="M157.300 67.600h6.200M160.400 64.500v6.200" stroke="#f4f5f7" stroke-width="1"/>
<path d="M168.2 71.5l2.4-8.5" stroke="#4a5364" stroke-width="0.6"/>
<!-- paper -->
<g stroke="#7fdcec" stroke-width="0.9" fill="none">
<path d="M226 75.6H261"/><path d="M226 406.8H261"/>
<path d="M307 75.6H334"/><path d="M307 406.8H334"/>
<path d="M378 75.6H406"/><path d="M378 406.8H406"/>
<path d="M450 75.6H479"/><path d="M450 406.8H479"/>
<path d="M521 75.6H558"/><path d="M521 406.8H558"/>
<path d="M226.4 75.2V111"/><path d="M557.6 75.2V111"/>
<path d="M226.4 154V184.5"/><path d="M557.6 154V184.5"/>
<path d="M226.4 227V256"/><path d="M557.6 227V256"/>
<path d="M226.4 299V327"/><path d="M557.6 299V327"/>
<path d="M226.4 371V407.2"/><path d="M557.6 371V407.2"/>
</g>
<!-- drawing1 -->
<g class="ln">
<path d="M241 251.5H523"/>
<rect x="281.6" y="99" width="14.4" height="4.7" rx="1"/>
<path d="M282.6 103.7V107.4H295.1V103.7M289.6 103.7V107.4"/>
<path d="M282.2 107.4V139.6M295.2 107.4V122C295.4 129 296.8 134 298.8 139"/>
<path d="M282.4 137.3V131.6L287 129L291 131.6V137.6"/>
<path d="M254.2 156L287.3 136.4L346.2 155.4L345.4 157.2H254.6Z"/>
<path d="M256.5 156.6L287.3 138.3L343.5 156.5"/>
<path d="M267.5 157.2V163.9H303.5V157.2"/>
<path d="M263.4 157.2V251.5M284.600 163.900V251.500M288.400 163.900V251.500M299.6 163.9V251.5"/>
<path d="M299.6 214.6H357V218.1H299.6M355.2 218.1V251.5"/>
<path d="M307.1 251.5V241A13.8 13.8 0 0 1 334.7 241V251.5"/>
<path d="M306.9 214.6V212.6A13.9 13.9 0 0 1 334.7 212.6V214.6"/>
<path d="M309.9 214.6V212.8A10.9 10.9 0 0 1 331.7 212.8V214.6"/>
<path d="M307 157.200C308.400 162.400 311.400 167.600 317 171.600C325 176.400 334 179 342 187C349 194 353.500 203 354 214.600"/>
</g>
<path class="ln" stroke-width="0.4" d="M310.27 209.88L307.37 209.10M311.36 207.25L308.76 205.75M313.09 204.99L310.97 202.87M315.35 203.26L313.85 200.66M317.98 202.17L317.20 199.27M320.80 201.80L320.80 198.80M323.62 202.17L324.40 199.27M326.25 203.26L327.75 200.66M328.51 204.99L330.63 202.87M330.24 207.25L332.84 205.75M331.33 209.88L334.23 209.10"/>
<g class="ln" stroke-width="0.5"><path d="M263.4 165.8H284.6M269.4 165.8V168.75M275.4 165.8V168.75M281.4 165.8V168.75M263.4 168.75H284.6M266.4 168.75V171.7M272.4 168.75V171.7M278.4 168.75V171.7M263.4 171.7H284.6M269.4 171.7V174.65M275.4 171.7V174.65M281.4 171.7V174.65M263.4 174.65H284.6M266.4 174.65V177.6M272.4 174.65V177.6M278.4 174.65V177.6M263.4 177.6H284.6M269.4 177.6V180.55M275.4 177.6V180.55M281.4 177.6V180.55M263.4 180.55H284.6M266.4 180.55V183.5M272.4 180.55V183.5M278.4 180.55V183.5M263.4 183.5H284.6M269.4 183.5V186.45M275.4 183.5V186.45M281.4 183.5V186.45M263.4 186.45H284.6M266.4 186.45V189.4M272.4 186.45V189.4M278.4 186.45V189.4M263.4 189.4H284.6M269.4 189.4V192.35M275.4 189.4V192.35M281.4 189.4V192.35M263.4 192.35H284.6M266.4 192.35V195.3M272.4 192.35V195.3M278.4 192.35V195.3M263.4 195.3H284.6M269.4 195.3V197.6M275.4 195.3V197.6M281.4 195.3V197.6"/></g>
<g class="ln" stroke-width="0.5"><path d="M288.4 165.6H299.6M294.4 165.6V168.55M288.4 168.55H299.6M291.4 168.55V171.5M297.4 168.55V171.5M288.4 171.5H299.6M294.4 171.5V174.45M288.4 174.45H299.6M291.4 174.45V177.4M297.4 174.45V177.4M288.4 177.4H299.6M294.4 177.4V180.35M288.4 180.35H299.6M291.4 180.35V183.3M297.4 180.35V183.3M288.4 183.3H299.6M294.4 183.3V186.25M288.4 186.25H299.6M291.4 186.25V189.2M297.4 186.25V189.2M288.4 189.2H299.6M294.4 189.2V192.15M288.4 192.15H299.6M291.4 192.15V195.1M297.4 192.15V195.1M288.4 195.1H299.6M294.4 195.1V197.6"/></g>
<g class="ln" stroke-width="0.5"><path d="M263.4 214.2H284.6M269.4 214.2V217.15M275.4 214.2V217.15M281.4 214.2V217.15M263.4 217.15H284.6M266.4 217.15V220.1M272.4 217.15V220.1M278.4 217.15V220.1M263.4 220.1H284.6M269.4 220.1V223.05M275.4 220.1V223.05M281.4 220.1V223.05M263.4 223.05H284.6M266.4 223.05V226M272.4 223.05V226M278.4 223.05V226M263.4 226H284.6M269.4 226V228.95M275.4 226V228.95M281.4 226V228.95M263.4 228.95H284.6M266.4 228.95V231.9M272.4 228.95V231.9M278.4 228.95V231.9M263.4 231.9H284.6M269.4 231.9V234.85M275.4 231.9V234.85M281.4 231.9V234.85M263.4 234.85H284.6M266.4 234.85V237.8M272.4 234.85V237.8M278.4 234.85V237.8M263.4 237.8H284.6M269.4 237.8V240.75M275.4 237.8V240.75M281.4 237.8V240.75M263.4 240.75H284.6M266.4 240.75V243.7M272.4 240.75V243.7M278.4 240.75V243.7M263.4 243.7H284.6M269.4 243.7V246.65M275.4 243.7V246.65M281.4 243.7V246.65M263.4 246.65H284.6M266.4 246.65V249.6M272.4 246.65V249.6M278.4 246.65V249.6M263.4 249.6H284.6M269.4 249.6V251.5M275.4 249.6V251.5M281.4 249.6V251.5"/></g>
<g class="ln" stroke-width="0.5"><path d="M288.4 214.2H299.6M294.4 214.2V217.15M288.4 217.15H299.6M291.4 217.15V220.1M297.4 217.15V220.1M288.4 220.1H299.6M294.4 220.1V223.05M288.4 223.05H299.6M291.4 223.05V226M297.4 223.05V226M288.4 226H299.6M294.4 226V228.95M288.4 228.95H299.6M291.4 228.95V231.9M297.4 228.95V231.9M288.4 231.9H299.6M294.4 231.9V234.85M288.4 234.85H299.6M291.4 234.85V237.8M297.4 234.85V237.8M288.4 237.8H299.6M294.4 237.8V240.75M288.4 240.75H299.6M291.4 240.75V243.7M297.4 240.75V243.7M288.4 243.7H299.6M294.4 243.7V246.65M288.4 246.65H299.6M291.4 246.65V249.6M297.4 246.65V249.6M288.4 249.6H299.6M294.4 249.6V251.5"/></g>
<path class="ln" stroke-width="0.5" d="M263.4 197.6H284.3M288.4 197.6H299.6M263.4 213.9H284.3M288.4 213.9H299.6M265.4 198.4H283.9V212.6H265.4ZM289 198.4H299.2V212.6H289ZM267 198.4V212.6M269.1 198.4V212.6M270.8 198.4V212.6M273.6 198.4V212.6M275.3 198.4V212.6M278.3 198.4V212.6M279.9 198.4V212.6M282.4 198.4V212.6M290.7 198.4V212.6M293.5 198.4V212.6M295.2 198.4V212.6M297.9 198.4V212.6"/>
<!-- drawing2 -->
<g class="ln">
<rect x="431.2" y="99.2" width="14.4" height="4.5" rx="1"/>
<path d="M432.3 103.7V107.4H444.5V103.7M438.4 103.7V107.4"/>
<path d="M430.2 107.4V143C430.2 150 429 158 426.2 165C423.6 171.6 421 176 417.6 180C414 184 409 186 405 188.8C399 193 395 198 392.5 203.8C389.6 209.6 387 214 387 222V251.5"/>
<path d="M430.2 107.4H446.6V156"/>
<path d="M446.6 128.5H506.6V251.5M446.6 135.5H506.6M446.6 154.5H506.6M446.6 156H504.2"/>
<path d="M451.3 135.5V154.5M456.8 135.5V154.5M463 135.5V154.5M469.5 135.5V154.5M475.9 135.5V154.5M482.5 135.5V154.5M489 135.5V154.5M495.4 135.5V154.5M501.9 135.5V154.5"/>
<path d="M504.2 156V251.5"/>
<path d="M446.6 156V213.9M450.9 156V198"/>
<path d="M450.9 198H504.2M446.6 213.9H504.2"/>
<path d="M433.1 213.9H506.6M433.1 213.9V217.6H506.6"/>
<path d="M446.9 217.6V251.5M450.9 217.6V251.5M501 217.6V251.5"/>
</g>
<g class="ln" stroke-width="0.5"><path d="M446.6 156.4H450.9M446.6 158.6H450.9M448.75 158.6V160.8M446.6 160.8H450.9M446.6 163H450.9M448.75 163V165.2M446.6 165.2H450.9M446.6 167.4H450.9M448.75 167.4V169.6M446.6 169.6H450.9M446.6 171.8H450.9M448.75 171.8V174M446.6 174H450.9M446.6 176.2H450.9M448.75 176.2V178.4M446.6 178.4H450.9M446.6 180.6H450.9M448.75 180.6V182.8M446.6 182.8H450.9M446.6 185H450.9M448.75 185V187.2M446.6 187.2H450.9M446.6 189.4H450.9M448.75 189.4V191.6M446.6 191.6H450.9M446.6 193.8H450.9M448.75 193.8V196M446.6 196H450.9"/></g>
<g class="ln" stroke-width="0.5"><path d="M446.6 198H504.2M454 198V201.18M461.4 198V201.18M468.8 198V201.18M476.2 198V201.18M483.6 198V201.18M491 198V201.18M498.4 198V201.18M446.6 201.18H504.2M450.3 201.18V204.36M457.7 201.18V204.36M465.1 201.18V204.36M472.5 201.18V204.36M479.9 201.18V204.36M487.3 201.18V204.36M494.7 201.18V204.36M502.1 201.18V204.36M446.6 204.36H504.2M454 204.36V207.54M461.4 204.36V207.54M468.8 204.36V207.54M476.2 204.36V207.54M483.6 204.36V207.54M491 204.36V207.54M498.4 204.36V207.54M446.6 207.54H504.2M450.3 207.54V210.72M457.7 207.54V210.72M465.1 207.54V210.72M472.5 207.54V210.72M479.9 207.54V210.72M487.3 207.54V210.72M494.7 207.54V210.72M502.1 207.54V210.72M446.6 210.72H504.2M454 210.72V213.9M461.4 210.72V213.9M468.8 210.72V213.9M476.2 210.72V213.9M483.6 210.72V213.9M491 210.72V213.9M498.4 210.72V213.9"/></g>
<!-- drawing3 -->
<g class="ln">
<path d="M238.8 386.4H521"/>
<path d="M264.8 386.4V382.8H375.8V386.4"/>
<path d="M327 281V278.700L340.500 272.900L353.800 278.700V281ZM331.500 280.800L340.500 275.800L349.500 280.800"/>
<path d="M331.500 281V299.200M349.500 281V299.200M331.500 299.200H349.500M331.500 282.400H349.500"/>
<path d="M331.500 299.200L320 324.600M349.500 299.200L361.500 324.600M319.400 324.600H362.200M319 326.100H362.600"/>
<path d="M316 327.300H365.600V330.300H316Z" stroke-width="0.8"/>
<path d="M320.400 330.300V356M324 330.300V356M357.100 330.300V356M361 330.300V356M321.700 330.300V356M359.600 330.300V356" />
<path d="M324 332.4H357.1M324 337.6H357.1M324 340.5H357.1M324 351.7H357.1M324 353.6H357.1"/>
<path stroke-width="0.95" stroke="#4a4a4a" d="M325.6 340.5V351.7M328.1 340.5V351.7M330.6 340.5V351.7M333.1 340.5V351.7M335.6 340.5V351.7M338.1 340.5V351.7M340.6 340.5V351.7M343.1 340.5V351.7M345.6 340.5V351.7M348.1 340.5V351.7M350.6 340.5V351.7M353.1 340.5V351.7M355.6 340.5V351.7"/>
<path d="M306.300 356.200H375.900V360H306.300Z"/>
<path d="M264.8 352.3H320.4M264.8 352.3V356.2H306.2"/>
<path d="M270.1 352.3V332.6Q270.1 328.6 274.1 328.6H320.4"/>
<path d="M279 328.6V320Q279 315.9 283 315.9H324M285 320.300H322.300M285 321.100H322"/>
<path d="M279.700 352.300A13.300 13.300 0 0 1 306.300 352.300" stroke-width="0.75"/>
<path d="M293 346.400V352.300"/>
<path d="M274.600 356.200V382.800M320.400 360V382.800M349.100 360V382.800M361 360V382.800"/>
</g>
<g fill="#444"><circle cx="276.2" cy="332.6" r="0.5"/><circle cx="311.8" cy="332.6" r="0.5"/><circle cx="286.400" cy="344.300" r="0.500"/><circle cx="297.600" cy="344.300" r="0.500"/></g>
<!-- drawing4 -->
<g class="ln">
<path d="M451.3 386.4V383H504.1V386.4"/>
<path d="M451.3 383V273.3H468V299L483.4 325.6M451.3 280.4H468M451.3 299H468"/>
<path d="M453 329.300V321.600Q453 320.300 454.300 320.300H459Q460.300 320.300 460.300 321.600V329.300"/>
<path d="M460.300 324.700H484M460.300 325.600H484M460.300 326.800H484M460.300 328.300H484M484 324.700V329.400"/>
<path d="M484 329.400H490.900V352.400M451.300 352.400H504V356.400H451.300"/>
<path d="M451.300 329.400H484" stroke-dasharray="1.200 1"/>
<path d="M490.900 342L493.200 352.400"/>
<path d="M482.4 332.6A9.6 7.8 0 0 0 482.4 348.2" stroke-dasharray="1.6 1.2"/>
<path d="M482.4 348.2V352.5" stroke-dasharray="1 0.8"/>
<path d="M493.400 356.400V358.600Q493.400 359.700 492.300 359.700H484.400"/>
<path d="M451.300 359.500H484.400" stroke-dasharray="1.200 1"/>
<path d="M484.400 356.400V383"/>
</g>
<!-- dwg -->
<defs><linearGradient id="dwgb" x1="0" y1="0" x2="1" y2="1"><stop offset="0" stop-color="#1f5090"/><stop offset="0.5" stop-color="#19437f"/><stop offset="1" stop-color="#2b62a4"/></linearGradient><linearGradient id="dwgy" x1="0.1" y1="0" x2="0.5" y2="1"><stop offset="0" stop-color="#faee84"/><stop offset="0.5" stop-color="#f5d43a"/><stop offset="1" stop-color="#e2aa1e"/></linearGradient></defs>
<path d="M43.5 295H73L86.200 308V350.800H43.500Z" fill="url(#dwgb)"/>
<path d="M56.500 314.400H86.200V334.500L56.500 327.600Z" fill="#2f68aa" opacity="0.45"/>
<path d="M43.500 324.400L86.200 334.500V350.800H43.500Z" fill="url(#dwgy)"/>
<path d="M43.500 343V350.800H60Z" fill="#c8901a" opacity="0.5"/>
<path d="M73 295L86.200 308H77.500Q73 308 73 303.600Z" fill="#122f5c"/>
<path d="M73 295V303Q73 308 78 308H86.200" fill="none" stroke="#3a6aa8" stroke-width="0.5"/>
<g stroke="#c4daee" stroke-width="0.8" fill="none"><path d="M55.900 295V325.600M43.500 313.600H86.200"/><rect x="51.400" y="308.400" width="9.600" height="9.600" fill="#1d4a88"/></g>
<rect x="55.600" y="312.400" width="1.800" height="1.800" fill="#0e2a52"/>
<text x="55.600" y="347.600" font-size="11.800" font-weight="bold" fill="#151515" stroke="#151515" stroke-width="0.3" textLength="29.800" lengthAdjust="spacingAndGlyphs">.dwg</text>
<!-- download -->
<defs><linearGradient id="dlg" x1="0" y1="0" x2="0" y2="1"><stop offset="0" stop-color="#ee3a3a"/><stop offset="0.5" stop-color="#dc1a22"/><stop offset="1" stop-color="#c20f18"/></linearGradient><radialGradient id="dlc" cx="0.5" cy="0.45" r="0.6"><stop offset="0" stop-color="#b0141a"/><stop offset="1" stop-color="#7e0a10"/></radialGradient></defs>
<rect x="8" y="360.300" width="111.100" height="40" rx="20" fill="#a60e16"/>
<rect x="9" y="361.200" width="109.100" height="37.600" rx="18.800" fill="url(#dlg)"/>
<circle cx="99.200" cy="380.100" r="12.200" fill="url(#dlc)"/>
<path d="M96.300 372.200h5.800v7.600h4.200l-7.100 9.200-7.100-9.200h4.200z" fill="#ffffff"/>
<text x="17.600" y="387.300" font-size="16.800" font-weight="bold" fill="#ffffff" stroke="#ffffff" stroke-width="0.3" textLength="64.800" lengthAdjust="spacingAndGlyphs">DOWNLOAD</text>
<!-- logo -->
<defs><linearGradient id="hair" x1="0" y1="0" x2="0" y2="1"><stop offset="0" stop-color="#fde04a"/><stop offset="0.6" stop-color="#f8b82a"/><stop offset="1" stop-color="#e8881a"/></linearGradient><linearGradient id="mop" x1="0" y1="0" x2="1" y2="1"><stop offset="0" stop-color="#fbd84a"/><stop offset="1" stop-color="#eea21a"/></linearGradient></defs>
<g stroke-linejoin="round">
<path d="M720 130.5l-6.4 7.4-3.2 3.2 3.4 3 5.2-4.6 6.4-6z" fill="#2a84d6" stroke="#14457c" stroke-width="0.55"/>
<path d="M726.4 133l5.6 5.4 2.4 5.6 4-1.6-2-6.8-4.4-6.4z" fill="#2a84d6" stroke="#14457c" stroke-width="0.55"/>
<path d="M710.6 140.6l3.6 3.2-1.6 2.2-4.6.6q-.8-1.600.4-2.800z" fill="#1f64b0" stroke="#14457c" stroke-width="0.55"/>
<path d="M734.200 143.400l4.200-1.600 2.600 4.600-1.200 2.200-3.200-.8z" fill="#1f64b0" stroke="#14457c" stroke-width="0.55"/>
<path d="M711.400 139.800l3.400 3.200M733.800 142.400l4.400-1.800" stroke="#56606e" stroke-width="1.1" fill="none"/>
<path d="M719.6 116q6.600-3 13.400 0l1 10-2 8.200q-6.400 1.800-12.400-.4l-1.800-8z" fill="#2a84d6" stroke="#14457c" stroke-width="0.55"/>
<path d="M726.2 115.200l.6 13" stroke="#14457c" stroke-width="0.5" fill="none"/>
<path d="M719.200 131.400q6.400 2.200 12.600.2" stroke="#14457c" stroke-width="0.5" fill="none"/>
<path d="M732 116.400l5-1.400 3-3.400 3 1.600-.6 4.800-4.600 4-5 .8z" fill="#2a84d6" stroke="#14457c" stroke-width="0.55"/>
<path d="M696.6 129.200L754.400 107.800" stroke="#6a4220" stroke-width="2.300" stroke-linecap="round"/>
<path d="M696.6 129.200L754.400 107.800" stroke="#a06a38" stroke-width="1.300" stroke-linecap="round"/>
<path d="M720.400 116l-6.400 3.600-4.600 3.400 1.400 3.400 6-1.800 5.600-3.600z" fill="#2a84d6" stroke="#14457c" stroke-width="0.55"/>
<circle cx="709.600" cy="124.600" r="1.900" fill="#f2b684" stroke="#8a4a20" stroke-width="0.4"/><circle cx="741.400" cy="112.200" r="1.900" fill="#f2b684" stroke="#8a4a20" stroke-width="0.4"/>
<ellipse cx="739.600" cy="103.400" rx="1.700" ry="2.600" fill="#eea06a" stroke="#8a4a20" stroke-width="0.4"/>
<path d="M713.600 99q-.8 8 4 12.400q4 3.600 9.400 3.400q6-.4 9.600-4.400q3.600-4.400 3.200-11.400z" fill="#f2b07a" stroke="#8a4a20" stroke-width="0.5"/>
<path d="M730 114.600q5.400-.8 8-5q2-3.400 1.800-8.600l-2.400 0q.4 8-7.400 13.600z" fill="#e8935a" opacity="0.7"/>
<path d="M714.600 94.400q-1.200-5 1.200-9l1.400 2.400q1.600-4.600 6-6.800l.2 2.600q3.800-4 8.400-3.600l-1.200 2.400q5.400.8 8 5.600q2.400 4.200 2.200 6.600z" fill="url(#hair)" stroke="#b86a14" stroke-width="0.5"/>
<path d="M719.400 93.600q-.4-5.400 3.400-9.400q-.6 5 1.400 9.400M728 93.400q-1.400-6 2-11q.4 6 3.600 11M736 93.600q-.4-4-2.400-7" fill="none" stroke="#e88a1a" stroke-width="0.7"/>
<path d="M713 93.800q14-2.400 27.800-.200l.200 6.200q-7 1.300-13.800 1.300t-14-1.300z" fill="#36373b" stroke="#1c1c1e" stroke-width="0.4"/>
<path d="M715 96.400q12-1.800 24-.2" stroke="#5c5e64" stroke-width="1.2" fill="none"/>
<path d="M740.600 95q4-2.800 8.800-1.800l-3 2 3.800 1.600-4.200.8q1.800 2.800 1.400 5.200q-3.400-2.600-7-4.600z" fill="#303134" stroke="#1c1c1e" stroke-width="0.3"/>
<path d="M716.800 101.600q2.600-.6 5.200.8q-1 2-3.200 1.800q-1.800-.4-2-2.600z" fill="#fff" stroke="#3a2a1a" stroke-width="0.35"/>
<path d="M728 102.400q2.800-1.600 6-.8q-.4 2.400-2.800 2.800q-2.400 0-3.200-2z" fill="#fff" stroke="#3a2a1a" stroke-width="0.35"/>
<circle cx="720" cy="102.700" r="0.900" fill="#2a3a4a"/><circle cx="730.400" cy="103" r="1" fill="#2a3a4a"/>
<path d="M716.400 100.800l5.800 1.400M734.600 101l-6.800 1.200" stroke="#4a2a14" stroke-width="0.8"/>
<path d="M721.600 108.400q4.800 2.800 10.200-.8" fill="none" stroke="#7a3a1c" stroke-width="0.7"/>
<path d="M750.200 97q3.600 1 6.600 4q4.600 3.600 5.800 8.200l-2.200-.2.400 3.600-1.800-1.400-.2 4.800-1.800-3-1.800 1.200-.8-6.200q-1.800-5.600-4.200-8z" fill="url(#mop)" stroke="#c8861a" stroke-width="0.4"/>
<path d="M753.600 100.600q3.800 4.600 4 11" stroke="#e09a1a" stroke-width="0.6" fill="none"/>
</g>
<path id="lgcurve" d="M678.600 159.400Q722 174.500 780 154.500" fill="none"/>
<text font-family="Liberation Sans, sans-serif" fill="#2b8fd8" stroke="#2b8fd8" stroke-width="0.55"><textPath href="#lgcurve" startOffset="0"><tspan font-size="21.500">P</tspan><tspan font-size="13.800" dx="-1.2" letter-spacing="1.5">islik</tspan><tspan font-size="16.500" dx="2">M</tspan><tspan font-size="15" dx="1.6" letter-spacing="2.7">imar</tspan></textPath></text>
<!-- statusbar -->
<path d="M6.400 413.700h6.200M6.400 415.800h6.200M6.400 417.900h6.200" stroke="#b4bac4" stroke-width="0.9"/>
<path d="M17.2 420.4l2.2-9.6" stroke="#4a5364" stroke-width="0.6"/>
<text class="t" x="23.8" y="417.76" font-size="4.9" textLength="13.2" lengthAdjust="spacingAndGlyphs" >Model</text>
<path d="M41 422L44.200 409.800H71.800L68 422z" fill="#3a4151"/>
<text class="t" x="47.2" y="417.96" font-size="4.9" textLength="17" lengthAdjust="spacingAndGlyphs" font-weight="bold" style="fill:#ffffff;stroke:#ffffff">Layout1</text>
<path d="M75.500 416h5.400M78.200 413.300v5.400" stroke="#f4f5f7" stroke-width="1"/>
<path d="M86.6 420.4l2.2-9.6" stroke="#4a5364" stroke-width="0.6"/>
<rect x="113" y="406.8" width="0.8" height="2.4" fill="#222834"/><rect x="670" y="406.2" width="0.8" height="3" fill="#222834"/>
<rect x="602" y="410.4" width="178" height="11.2" fill="#2c3441"/>
<text class="t" x="604" y="417.73" font-size="4.8" textLength="13.3" lengthAdjust="spacingAndGlyphs" font-weight="bold">PAPER</text>
<g fill="none" stroke="#d5dae0" stroke-width="0.7">
<path d="M621.6 412.6v6.4h5"/>
<circle cx="634.3" cy="416" r="2.6"/><path d="M634.3 416h3.4" />
<path d="M648.6 413l3 6M651.6 414.6l-2.4 1.6"/>
</g>
<path d="M641.4 415.9h2.4l-1.2 1.2z" fill="#dde1e6"/>
<path d="M657.3 415.9h2.4l-1.2 1.2z" fill="#dde1e6"/>
<rect x="663" y="411.6" width="9.4" height="9.8" fill="#4f94d6"/><rect x="673.2" y="411.6" width="9" height="9.8" fill="#4f94d6"/>
<path d="M665 419.4l5.6-5.6M665 419.6h5.6" stroke="#fff" stroke-width="0.8" fill="none"/>
<rect x="675.2" y="413.6" width="5" height="5.8" fill="none" stroke="#fff" stroke-width="0.8"/>
<path d="M684.6 415.9h2.4l-1.2 1.2z" fill="#dde1e6"/>
<g fill="none" stroke="#d5dae0" stroke-width="0.7">
<rect x="691.4" y="413.2" width="5.6" height="5.6" stroke-dasharray="1.4 0.8"/>
<path d="M702 419l2.4-6 2.4 6M703 417h3M706.4 413.4l1.6-1"/>
<path d="M712 419l2.4-6 2.4 6M713 417h3M716.4 413.4l1.6-1"/>
</g>
<circle cx="724.8" cy="416" r="2.2" fill="none" stroke="#e8ebee" stroke-width="1.5" stroke-dasharray="1.1 0.65"/><circle cx="724.8" cy="416" r="1.5" fill="none" stroke="#e8ebee" stroke-width="0.9"/>
<path d="M732.3 415.9h2.4l-1.2 1.2z" fill="#dde1e6"/>
<path d="M738.400 416.600h6.400M741.600 413.400v6.400" stroke="#f0f2f4" stroke-width="0.8"/>
<g fill="none" stroke="#d5dae0" stroke-width="0.7">
<circle cx="751" cy="414.4" r="1.4"/><circle cx="754.4" cy="417.8" r="1.4"/><path d="M749.6 419h2.4M753.2 413h2.4"/>
<rect x="760.4" y="413.2" width="6.4" height="5.4"/><path d="M764 414.6h1.6v1.6"/>
</g>
<path d="M771.4 413.6h6.2M771.4 416h6.2M771.4 418.4h6.2" stroke="#e8ebee" stroke-width="0.9"/>
<!-- taskbar -->
<path d="M6.4 429l2.8-.4v2.9H6.4zM9.7 428.5l3.5-.5v3.5H9.7zM6.4 432h2.8v2.9l-2.8-.4zM9.7 432h3.5v3.5l-3.5-.5z" fill="#ffffff"/>
<rect x="20" y="423" width="116" height="16" fill="#f3f3f3"/>
<circle cx="28.8" cy="429.6" r="2" fill="none" stroke="#333" stroke-width="0.7"/><path d="M27.3 431.2l-2.6 2.6" stroke="#333" stroke-width="0.7"/>
<text x="36" y="433.3" font-size="5.7" fill="#3a3a3a" textLength="8.6" lengthAdjust="spacingAndGlyphs">Ara</text>
<defs><linearGradient id="pic" x1="0" y1="0" x2="0" y2="1"><stop offset="0" stop-color="#e6b6cc"/><stop offset="0.4" stop-color="#b9a0cf"/><stop offset="0.62" stop-color="#8c88ba"/><stop offset="1" stop-color="#6a6c9c"/></linearGradient><clipPath id="picc"><ellipse cx="120.6" cy="430.1" rx="15.8" ry="6.9"/></clipPath></defs>
<g clip-path="url(#picc)"><rect x="104" y="423" width="33" height="16" fill="url(#pic)"/><path d="M104 432.6v-4l3.200-1.800 2.600.4 1.600 1.600 2.400-.6 1.800 1.800 3.400.4 2.200-1.400 2.600 1.200 3.600-1.600 3 1.400 2.600-.4 3 1.400v2.400h-32z" fill="#3d4566"/><path d="M104 432.400h33v1.200h-33z" fill="#59608a"/></g>
<rect x="178" y="422" width="18.4" height="17" fill="#3a3d44"/>
<circle cx="147.4" cy="430.4" r="5.2" fill="#f0c030"/><path d="M147.4 430.4L142.700 428.100A5.200 5.200 0 0 1 152.100 428.100Z" fill="#dc4030"/><path d="M147.400 430.400L142.700 428.100A5.200 5.200 0 0 0 147 435.600Z" fill="#3ea654"/><circle cx="147.4" cy="430.4" r="2.3" fill="#4a8fe0" stroke="#fff" stroke-width="0.7"/>
<circle cx="167.4" cy="430.6" r="4.2" fill="none" stroke="#c89a3c" stroke-width="1"/><path d="M165.4 425.4h2.4v8h3.4l-.8 1.8h-5z" fill="#e8c878"/>
<rect x="182.6" y="425.2" width="9.400" height="10.600" rx="1.200" fill="#d6164a"/><text x="187.300" y="433" font-size="7" font-weight="bold" fill="#fff" text-anchor="middle">A</text><rect x="185.400" y="434" width="3.800" height="0.700" fill="#f4b8c8"/>
<ellipse cx="207.6" cy="431" rx="4.8" ry="3.8" fill="#c9ccd2"/><circle cx="209" cy="430" r="1.3" fill="#3a6ab0"/><path d="M205 433.6l6-7" stroke="#e8a83c" stroke-width="0.9"/>
<ellipse cx="227.400" cy="430.600" rx="3.300" ry="4.200" fill="none" stroke="#e8202c" stroke-width="2"/>
<rect x="139.4" y="437.4" width="16.6" height="1.6" fill="#8cb8e0"/>
<rect x="159.6" y="437.4" width="16.4" height="1.6" fill="#8cb8e0"/>
<rect x="178" y="437.4" width="18.4" height="1.6" fill="#8cb8e0"/>
<rect x="199.6" y="437.4" width="16.8" height="1.6" fill="#8cb8e0"/>
<rect x="219.6" y="437.4" width="16.8" height="1.6" fill="#8cb8e0"/>
<path d="M714.6 431.8l2.2-2.2 2.2 2.2" fill="none" stroke="#e8ebee" stroke-width="0.7"/>
<path d="M723.6 429.6h1.4l1.8-1.6v5.4l-1.8-1.6h-1.4z" fill="none" stroke="#e8ebee" stroke-width="0.6"/><path d="M728.2 429.2q1 1.4 0 3M729.4 428.2q1.8 2.4 0 5" fill="none" stroke="#e8ebee" stroke-width="0.5"/>
<text class="t" x="744.8" y="428.56" font-size="4.6" text-anchor="middle" textLength="11" lengthAdjust="spacingAndGlyphs" style="fill:#f0f2f4;stroke:#f0f2f4">22:33</text>
<text class="t" x="744.8" y="435.16" font-size="4.6" text-anchor="middle" textLength="21.6" lengthAdjust="spacingAndGlyphs" style="fill:#f0f2f4;stroke:#f0f2f4">20.04.2026</text>
<path d="M763.4 427.6h6.4v5h-3.6l-1.4 1.4v-1.4h-1.4z" fill="#f0f2f4"/><circle cx="769.4" cy="433" r="1.9" fill="#1b1d21" stroke="#f0f2f4" stroke-width="0.5"/>
</svg></body></html>
